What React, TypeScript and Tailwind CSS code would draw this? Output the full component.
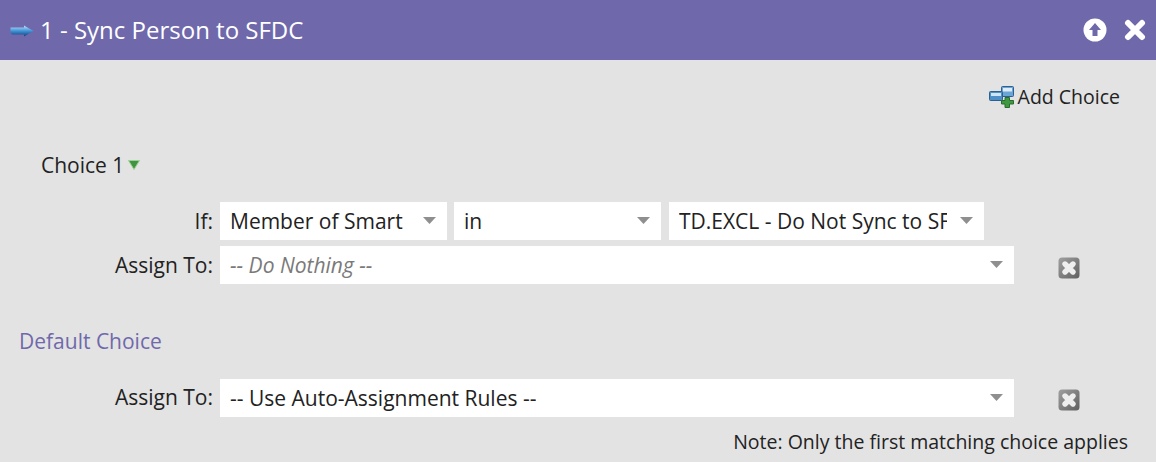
import React from "react";

const Caret = () => (
  <svg width="13" height="7" viewBox="0 0 13 7" className="mb-[2px] shrink-0">
    <path d="M0 0H13L6.5 7Z" fill="#8f8f8f" />
  </svg>
);

const RemoveIcon = () => (
  <svg width="22" height="22" viewBox="0 0 22 22">
    <defs>
      <linearGradient id="removeBg" x1="0" y1="0" x2="1" y2="1">
        <stop offset="0" stopColor="#a0a0a0" />
        <stop offset="1" stopColor="#606060" />
      </linearGradient>
    </defs>
    <rect x="0.5" y="0.5" width="21" height="21" rx="3.5" fill="url(#removeBg)" />
    <path d="M7 7L15 15M15 7L7 15" stroke="#eeeeee" strokeWidth="5.4" strokeLinecap="round" />
  </svg>
);

interface SelectProps {
  label: string;
  className: string;
  muted?: boolean;
  textClassName?: string;
}

const Select: React.FC<SelectProps> = ({ label, className, muted, textClassName }) => (
  <div className={`flex h-[38px] items-center justify-between bg-white pl-[10px] pr-[11px] ${className}`}>
    <span
      className={`overflow-hidden whitespace-nowrap ${
        muted ? "italic text-[#7a7a7a]" : "text-[#222222]"
      } ${textClassName ?? ""}`}
    >
      {label}
    </span>
    <Caret />
  </div>
);

const Label: React.FC<{ text: string; className?: string }> = ({ text, className }) => (
  <div className={`w-[220px] shrink-0 pr-[7px] text-right text-[#222222] ${className ?? ""}`}>{text}</div>
);

export default function App() {
  return (
    <div className="flex h-[462px] w-[1156px] flex-col overflow-hidden bg-[#e3e3e3] font-['Open_Sans',sans-serif] text-[21px] leading-[28px] text-[#222222]">
      <header className="flex h-[60px] shrink-0 items-center bg-[#6f69ac] pl-[10px] pr-[10px] text-white">
        <svg width="24" height="12" viewBox="0 0 24 12" className="mr-[7px] mt-[2px] shrink-0">
          <defs>
            <linearGradient id="arrowFill" x1="0" y1="0" x2="0" y2="1">
              <stop offset="0" stopColor="#c2e2f7" />
              <stop offset="0.5" stopColor="#3f92d6" />
              <stop offset="1" stopColor="#123f7c" />
            </linearGradient>
          </defs>
          <path d="M0.5 2.5H14V0.5L23.5 6L14 11.5V9.5H2L0.5 7.5Z" fill="url(#arrowFill)" />
        </svg>
        <h1 className="ml-[-1px] text-[24px] font-normal leading-[32px]">1 - Sync Person to SFDC</h1>
        <div className="ml-auto flex items-center gap-[17px]">
          <svg width="24" height="24" viewBox="0 0 24 24">
            <circle cx="12" cy="12" r="11.5" fill="#ffffff" />
            <path d="M12 5L18 12H14.5V18H9.5V12H6Z" fill="#6f69ac" />
          </svg>
          <svg width="22" height="22" viewBox="0 0 22 22">
            <path d="M4 4L18 18M18 4L4 18" stroke="#ffffff" strokeWidth="6" strokeLinecap="round" />
          </svg>
        </div>
      </header>

      <div className="flex h-[74px] shrink-0 items-center justify-end pr-[36px] text-[19.5px]">
        <svg width="26" height="22" viewBox="0 0 26 22" className="mr-[3px]">
          <rect x="12.5" y="0.5" width="12" height="10" rx="1" fill="#6aa5d8" stroke="#2f5f8f" />
          <rect x="14" y="2" width="9" height="3.5" fill="#dcecf8" />
          <rect x="0.5" y="5.5" width="13" height="9" rx="1" fill="#4f8fc8" stroke="#2f5f8f" />
          <rect x="2" y="7" width="10" height="3" fill="#cfe5f5" />
          <path d="M16 11.5H20.5V14.5H24.5V18H20.5V21.5H16V18H12.5V14.5H16Z" fill="#3f9a3f" stroke="#2b6b30" />
        </svg>
        <span>Add Choice</span>
      </div>

      <div className="mt-[17px] flex h-[28px] shrink-0 items-center pl-[41px]">
        <span>Choice 1</span>
        <svg width="12" height="10" viewBox="0 0 12 10" className="ml-[4px] mb-[1px]">
          <path d="M0.5 0.5H11.5L6 9.5Z" fill="#3f953f" stroke="#9ccf94" strokeWidth="1" />
        </svg>
      </div>

      <div className="mt-[23px] flex h-[38px] shrink-0 items-center">
        <Label text="If:" />
        <Select label="Member of Smart" className="mr-[7px] w-[227px]" />
        <Select label="in" className="mr-[8px] w-[207px]" />
        <Select label="TD.EXCL - Do Not Sync to SF" className="w-[315px]" textClassName="w-[268px]" />
      </div>

      <div className="mt-[6px] flex h-[38px] shrink-0 items-center">
        <Label text="Assign To:" />
        <Select label="-- Do Nothing --" muted className="w-[794px]" />
        <div className="ml-[44px] mt-[6px]">
          <RemoveIcon />
        </div>
      </div>

      <div className="mt-[43px] h-[28px] shrink-0 pl-[19px] text-[#6f69ac]">Default Choice</div>

      <div className="mt-[24px] flex h-[38px] shrink-0 items-center">
        <Label text="Assign To:" className="pb-[2px]" />
        <Select label="-- Use Auto-Assignment Rules --" className="w-[794px]" />
        <div className="ml-[44px] mt-[4px]">
          <RemoveIcon />
        </div>
      </div>

      <div className="mt-[11px] pr-[28px] text-right text-[19.5px] text-[#222222]">
        Note: Only the first matching choice applies
      </div>
    </div>
  );
}
